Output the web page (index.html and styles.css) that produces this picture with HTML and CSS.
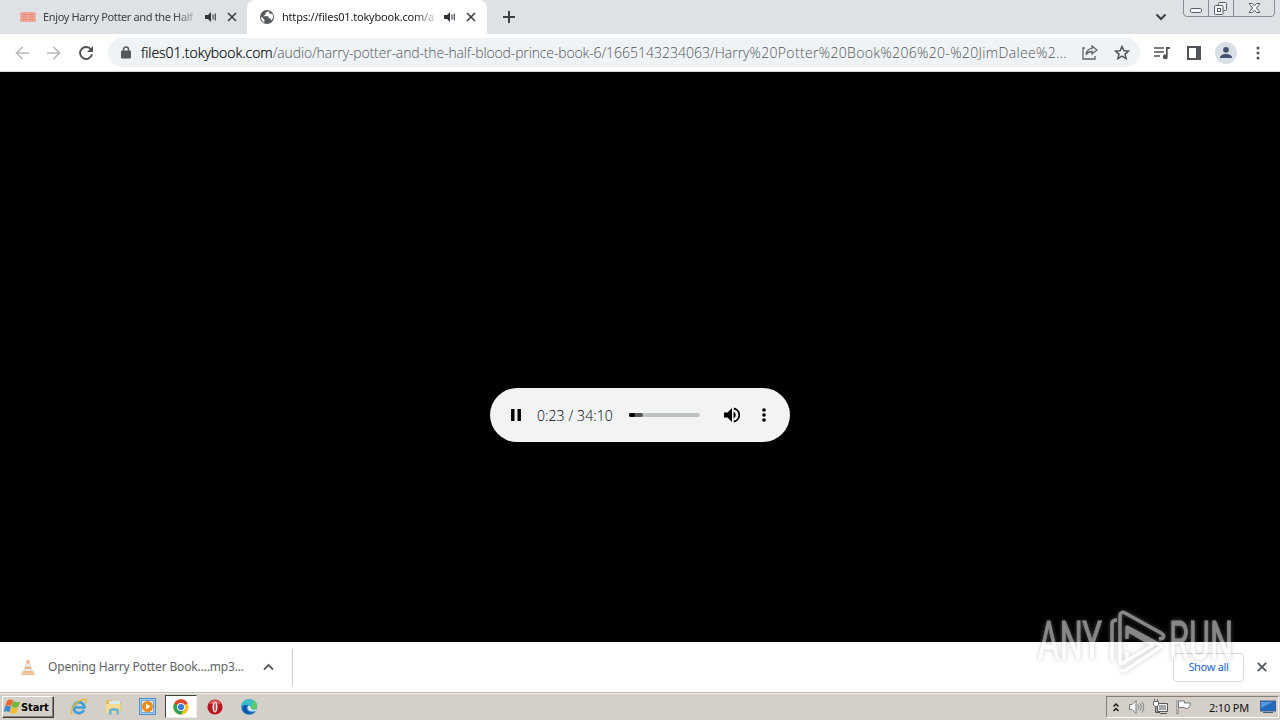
FILE: index.html
```html
<!DOCTYPE html>
<html lang="en">
<head>
  <meta charset="UTF-8">
  <title>files01.tokybook.com</title>
  <link rel="stylesheet" href="styles.css">
</head>
<body>
  <div class="tab-strip">
    <div class="tab">
      <svg class="favicon" width="16" height="16" viewBox="0 0 16 16"><rect y="3" width="16" height="10" rx="1.500" fill="#efa696"/><path d="M2 5.500h5M9 5.500h5M2 8h5M9 8h5M2 10.500h5M9 10.500h5" stroke="#e38776"/></svg>
      <span class="tab-title first">Enjoy Harry Potter and the Half</span>
      <svg class="audio" width="12" height="12" viewBox="0 0 12 12"><path d="M0 4h3l3-3v10L3 8H0z" fill="#303338"/><path d="M8 3.500v5M10.300 2.500v7" stroke="#45484d" stroke-width="1.200"/></svg>
      <svg class="tab-close" width="10" height="10" viewBox="0 0 10 10"><path d="M1 1l8 8M9 1L1 9" stroke="#3c4043" stroke-width="1.600"/></svg>
    </div>
    <div class="tab active">
      <svg class="favicon" width="16" height="16" viewBox="0 0 16 16"><circle cx="8" cy="8" r="7" fill="#55595d"/><path d="M2.200 7.400l3.200 3v3.200C3.200 12.500 1.800 10 2.200 7.400zM8.500 2.500l-2 1.500v1.500L4 7.300h5.500v2h1.800l1 2.300c2-1.700 2.300-4.500 1-6.800h-3V2.700z" fill="#fff"/></svg>
      <span class="tab-title second">https://files01.tokybook.com/au</span>
      <svg class="audio" width="12" height="12" viewBox="0 0 12 12"><path d="M0 4h3l3-3v10L3 8H0z" fill="#303338"/><path d="M8 3.500v5M10.300 2.500v7" stroke="#45484d" stroke-width="1.200"/></svg>
      <svg class="tab-close" width="10" height="10" viewBox="0 0 10 10"><path d="M1 1l8 8M9 1L1 9" stroke="#3c4043" stroke-width="1.600"/></svg>
    </div>
    <svg class="new-tab" width="14" height="14" viewBox="0 0 14 14"><path d="M7 1v12M1 7h12" stroke="#3c4043" stroke-width="2"/></svg>
    <svg class="tab-search" width="12" height="8" viewBox="0 0 12 8"><path d="M1.500 1.500L6 6l4.500-4.500" fill="none" stroke="#3c4043" stroke-width="2"/></svg>
    <div class="window-buttons">
      <svg width="92" height="17" viewBox="0 0 92 17" fill="none" stroke="#5b606c"><path d="M.5 0v13q0 3.500 3.500 3.500h84q3.500 0 3.500-3.500V0M25.500 0v16M50.500 0v16" stroke="#878c98"/><rect x="7.500" y="8.500" width="11" height="4" rx="1" fill="#f5f5f7"/><rect x="35.500" y="2.500" width="8" height="8" rx="1" fill="#eee"/><rect x="31.500" y="5.500" width="8.500" height="9" rx="1" fill="#f7f7f8"/><rect x="34.500" y="8.500" width="3" height="3"/><path d="M66 3.500h3.500l2 2.500 2-2.500H77l-3.500 4.500 3.500 4.500h-3.500l-2-2.500-2 2.500H66L69.500 8z" fill="#fafafa"/></svg>
    </div>
  </div>

  <div class="toolbar">
    <svg class="nav" width="14" height="14" viewBox="0 0 14 14"><path d="M14 7H1.500M7.500 1l-6 6 6 6" fill="none" stroke="#b9bbbe" stroke-width="1.700"/></svg>
    <svg class="nav" width="14" height="14" viewBox="0 0 14 14"><path d="M0 7h12.500M6.500 1l6 6-6 6" fill="none" stroke="#b9bbbe" stroke-width="1.700"/></svg>
    <svg class="nav" width="14" height="14" viewBox="0 0 14 14"><path d="M12 3.500A6 6 0 1 0 13 8.300" fill="none" stroke="#505357" stroke-width="1.900"/><path d="M14 0v6H8z" fill="#505357"/></svg>
    <div class="omnibox">
      <svg class="lock" width="10" height="13" viewBox="0 0 10 13"><path d="M2.500 6V3.500a2.500 2.500 0 0 1 5 0V6" fill="none" stroke="#55595d" stroke-width="1.500"/><rect y="4.500" width="10" height="8" rx="1" fill="#55595d"/></svg>
      <span class="url"><span class="host">files01.tokybook.com</span><span class="path">/audio/harry-potter-and-the-half-blood-prince-book-6/</span><span class="file">1665143234063/Harry</span><span class="escaped">%20Potter%20Book%206%20-%20JimDalee%2...</span></span>
      <svg class="share" width="16" height="15" viewBox="0 0 16 15" fill="none" stroke="#5f6368" stroke-width="1.300"><path d="M3 3H1v11h12v-3"/><path d="M10 1l5 4-5 4V6.500c-3 0-4.500 1-6 3C4.500 6 6 3.700 10 3.300z"/></svg>
      <svg class="star" width="16" height="15" viewBox="0 0 16 15"><path d="M8 1.500l1.900 4.200 4.600.4-3.500 3 1.100 4.500L8 11.200l-4.100 2.400L5 9.100l-3.500-3 4.600-.4z" fill="none" stroke="#505357" stroke-width="1.500"/></svg>
    </div>
    <svg class="media" width="17" height="14" viewBox="0 0 17 14"><path d="M0 2h10M0 6h10M0 10h6" stroke="#505357" stroke-width="1.600"/><path d="M12 10V1h4v2h-2.300v7.500a2.400 2.400 0 1 1-1.700-2" fill="#505357"/></svg>
    <svg class="side-panel" width="14" height="14" viewBox="0 0 14 14"><rect x="1" y="1" width="12" height="12" fill="#fff" stroke="#505357" stroke-width="2"/><path d="M9 1h4v12H9z" fill="#505357"/></svg>
    <svg class="profile" width="22" height="22" viewBox="0 0 22 22"><circle cx="11" cy="11" r="11" fill="#d9dfe6"/><circle cx="11" cy="7.800" r="2.900" fill="#435270"/><path d="M5 16c0-3 3-4 6-4s6 1 6 4z" fill="#435270"/></svg>
    <svg class="menu" width="4" height="14" viewBox="0 0 4 14" fill="#505357"><circle cx="2" cy="2" r="1.500"/><circle cx="2" cy="7" r="1.500"/><circle cx="2" cy="12" r="1.500"/></svg>
  </div>

  <div class="page">
    <div class="player">
      <svg class="pause" width="10" height="12" viewBox="0 0 10 12"><path d="M0 0h3.500v12H0zM6.500 0H10v12H6.500z"/></svg>
      <span class="time">0:23 / 34:10</span>
      <div class="track"><div class="buffered"><div class="played"></div></div></div>
      <svg class="volume" width="16" height="16" viewBox="0 0 16 16"><path d="M0 5.500h3.500L8 1v14l-4.500-4.500H0z"/><path d="M9.500 4.500q2.300 1.200 2.300 3.500t-2.300 3.500z"/><path d="M9.800 1.500a6.600 6.600 0 0 1 0 13" fill="none" stroke="#000" stroke-width="1.800"/></svg>
      <svg class="more" width="4" height="14" viewBox="0 0 4 14"><circle cx="2" cy="2" r="1.800"/><circle cx="2" cy="7" r="1.800"/><circle cx="2" cy="12" r="1.800"/></svg>
    </div>
  </div>

  <div class="downloads">
    <div class="download">
      <svg class="cone" width="14" height="17" viewBox="0 0 14 17"><path d="M0 16l1.500-4h11l1.500 4z" fill="#f2c39b"/><path d="M5.800 1h2.400l3.300 12h-9z" fill="#f0b88a"/><path d="M5 4.500h4l.8 3H4.200zM3.500 10h7l.6 2H2.900z" fill="#e9eaeb"/></svg>
      <span class="file-name">Opening Harry Potter Book....mp3...</span>
      <svg width="11" height="8" viewBox="0 0 11 8"><path d="M1 6.500l4.500-4.500L10 6.500" fill="none" stroke="#55595d" stroke-width="1.800"/></svg>
    </div>
    <button class="show-all"><span>Show all</span></button>
    <svg class="close-bar" width="10" height="10" viewBox="0 0 10 10"><path d="M.8.8l8.400 8.400M9.200.8L.8 9.200" stroke="#55595d" stroke-width="1.800"/></svg>
  </div>

  <div class="taskbar">
    <div class="start">
      <svg width="17" height="16" viewBox="0 0 17 16"><path d="M3 2q3-2.500 6-.5L7.300 7.300Q4.500 5.500 1.200 7z" fill="#e9652b"/><path d="M9.200 2q3 2 7 .5L14.300 8q-3 1.500-6.700-.3z" fill="#72b63d"/><path d="M1 7.500Q4 6 7 7.700L5.500 13Q2.500 11.500 0 13z" fill="#3988d5"/><path d="M7.500 8.200q3 1.700 6.500.3l-1.500 5.500q-3 1.500-6.500-.5z" fill="#f5bd25"/></svg>
      <span>Start</span>
    </div>
    <div class="launcher">
      <div class="task">
        <svg width="18" height="18" viewBox="0 0 18 18"><path d="M14 12A5.500 5.500 0 1 1 14.500 9.500H5" fill="none" stroke="#3c9fdf" stroke-width="2.700"/><path d="M2.500 16C-1.500 15 4 4 13 1.500c4-1 4 1.500 2.500 4" fill="none" stroke="#e7b832" stroke-width="1.400"/></svg>
      </div>
      <div class="task">
        <svg width="17" height="16" viewBox="0 0 17 16"><path d="M1 1h6l1 2h8v10H1z" fill="#dfbb56"/><path d="M4 2h11v6H4z" fill="#d7ecec"/><path d="M1 5h14.500v8.500H1z" fill="#f3dc8b"/><path d="M4 15.500v-5q5-3 10 0v5h-2.500v-3.800h-5v3.800z" fill="#63afe0"/></svg>
      </div>
      <div class="task">
        <svg width="17" height="17" viewBox="0 0 17 17"><rect x=".5" y=".5" width="16" height="16" fill="#a4cef0" stroke="#4d8dc9"/><rect x="2.500" y="2.500" width="12" height="12" fill="#d9edfa" stroke="#74a9d3"/><circle cx="8.500" cy="8.500" r="5.500" fill="#f38b12"/><path d="M7 5.500l4.500 3-4.500 3z" fill="#fff"/></svg>
      </div>
      <div class="task pressed">
        <svg width="16" height="16" viewBox="0 0 16 16"><circle cx="8" cy="8" r="7.700" fill="#f6c42a"/><path d="M8 8L1.300 4.200A7.700 7.700 0 0 0 7.800 15.700L11.300 10z" fill="#30a354"/><path d="M8 8L1.300 4.200a7.700 7.700 0 0 1 13.400 0z" fill="#df4535"/><circle cx="8" cy="8" r="4" fill="#fff"/><circle cx="8" cy="8" r="3.100" fill="#397be5"/></svg>
      </div>
      <div class="task">
        <svg width="16" height="16" viewBox="0 0 16 16"><circle cx="8" cy="8" r="7.600" fill="#b9151e"/><path d="M2 5a6.500 6.500 0 0 1 12 0z" fill="#db5358"/><ellipse cx="8" cy="8" rx="2.500" ry="5.500" fill="#f3eaea"/><ellipse cx="8" cy="8" rx=".7" ry="4.500" fill="#a31820"/></svg>
      </div>
      <div class="task">
        <svg width="17" height="16" viewBox="0 0 17 16"><circle cx="8" cy="8" r="7.800" fill="#1680d4"/><path d="M.5 7C1 1.500 6 0 9 .3c5 .3 8 4.500 7 8-1 3-5 2.700-6 1.500 1-4-4-5.300-9.500-2.800z" fill="#36bfc4"/><path d="M12 1.200c4 2 5 7 2.500 8.500-2 .8-4 .3-4.500-.5.500-3 2-5 2-8z" fill="#5bcb62"/><path d="M6 7c-2 5 3 8 8 6-5 5-14 0-12-5 1-2 3-2 4-1z" fill="#1554a0"/><path d="M7 7c-2 4 2 6.500 7.500 5l1-2c-3 1-5.500.5-5.500-1 0-2-2-3-3-2z" fill="#d4e6eb"/></svg>
      </div>
    </div>
    <div class="tray">
      <svg class="chevrons" width="6" height="9" viewBox="0 0 6 9"><path d="M.5 3.500L3 1l2.500 2.500M.5 8L3 5.500 5.500 8" fill="none" stroke="#111" stroke-width="1.400"/></svg>
      <svg class="sound" width="17" height="16" viewBox="0 0 17 16"><path d="M1.500 5.500H4l4-4v13l-4-4H1.500z" fill="#fafafa" stroke="#77797c"/><path d="M10 5.500q2 2.500 0 5M12 4q3 4 0 8M14 2.500q3.500 5.500 0 11" fill="none" stroke="#85878a"/></svg>
      <svg class="network" width="17" height="16" viewBox="0 0 17 16"><path d="M5.500 4.500h10v8h-10zM8 14.500h7M3.500 7v6.500H8" fill="#a5a7a8" stroke="#55585b"/><path d="M6.500 5.500h8v6h-8z" fill="none" stroke="#f3f3f3"/><path d="M1.500 2.500h5V6L5 7.500H3L1.500 6zM2.500 0v2M5.500 0v2" fill="#fff" stroke="#66696b"/></svg>
      <svg class="flag" width="16" height="16" viewBox="0 0 16 16"><path d="M1.500 1v14" stroke="#777" stroke-width="2"/><path d="M1.500 1v13" stroke="#ddd" stroke-width=".7"/><path d="M2.500 2h6v2h6q-1 6-4.500 5.500L8 8.500H2.500z" fill="#fafafa" stroke="#77797c"/></svg>
      <span class="clock">2:10 PM</span>
      <svg width="16" height="14" viewBox="0 0 16 14"><rect x=".5" y="1" width="15" height="10" fill="#2469c0" stroke="#3c6194"/><path d="M1 2h12L1 8z" fill="#5796df"/><path d="M3 12.500h10" stroke="#465b76"/></svg>
    </div>
  </div>

  <svg class="watermark" width="206" height="70" viewBox="0 0 206 70">
    <text x="5" y="52" textLength="64" lengthAdjust="spacingAndGlyphs">ANY</text>
    <text x="136" y="52" textLength="64" lengthAdjust="spacingAndGlyphs">RUN</text>
    <path d="M79 54V17q0-4 5-4M87 58V8q1-4 5-2l36 20q4 2 2 5l-4 1M94 32V20l35 19L93 63q-4 2-5-1M94 45v8M88 57l32-19-26-15" fill="none" stroke="#fff" stroke-width="3.500" stroke-linejoin="round"/>
  </svg>
</body>
</html>
```
FILE: styles.css
```css
* { box-sizing: border-box; margin: 0; padding: 0; }

body {
  width: 1280px;
  height: 720px;
  overflow: hidden;
  display: flex;
  flex-direction: column;
  position: relative;
  font-family: "Noto Sans", "DejaVu Sans", sans-serif;
  font-size: 12px;
  color: #3c4043;
}

svg { display: block; flex: none; }
span { white-space: nowrap; }

.tab-strip {
  height: 34px;
  flex: none;
  background: #dee1e6;
  display: flex;
  align-items: center;
}

.tab {
  width: 247px;
  height: 34px;
  padding: 0 10px 0 20px;
  display: flex;
  align-items: center;
}

.tab.active {
  width: 240px;
  padding: 0 11px 0 12px;
  background: #fff;
  border-radius: 8px 8px 0 0;
}

.tab-title {
  width: 153px;
  margin-left: 7px;
  font-size: 11px;
  line-height: 16px;
  padding-bottom: 1px;
  overflow: hidden;
  -webkit-mask-image: linear-gradient(to right, #000 132px, transparent 158px);
}

.tab.active .tab-title { width: 152px; }
.first { letter-spacing: -.36px; }
.second { letter-spacing: -.2px; color: #202124; }
.audio { margin-left: 9px; }
.active .audio { margin-left: 10px; }
.tab-close { margin-left: 10px; }
.new-tab { margin-left: 15px; }
.tab-search { margin-left: auto; }
.window-buttons { margin-left: 16px; margin-right: 5px; align-self: flex-start; }

.toolbar {
  height: 38px;
  flex: none;
  padding-left: 15px;
  background: #fff;
  border-bottom: 1px solid #d5d6d8;
  display: flex;
  align-items: center;
}

.nav { margin-right: 18px; }

.omnibox {
  width: 1032px;
  height: 29px;
  margin-left: -3px;
  padding: 0 10px 0 13px;
  border-radius: 15px;
  background: #f0f3f5;
  display: flex;
  align-items: center;
}

.url {
  width: 928px;
  margin-left: 10px;
  font-family: "Open Sans", "Noto Sans", sans-serif;
  font-size: 14px;
  font-weight: 300;
}

.host { color: #000; -webkit-text-stroke: .2px #000; letter-spacing: -.03px; }
.path, .file, .escaped { color: #50555a; }
.path { letter-spacing: -.14px; }
.escaped { letter-spacing: .34px; }
.share { margin-left: 13px; }
.star { margin-left: 16px; }
.media { margin-left: 14px; }
.side-panel { margin-left: 16px; }
.profile { margin-left: 14px; }
.menu { margin-left: 19px; }

.page {
  height: 570px;
  flex: none;
  background: #000;
  display: flex;
  justify-content: center;
  padding-top: 316px;
}

.player {
  width: 300px;
  height: 54px;
  padding-left: 21px;
  border-radius: 27px;
  background: #f1f3f4;
  display: flex;
  align-items: center;
}

.time {
  width: 92px;
  margin-left: 16px;
  font-family: "Open Sans", sans-serif;
  font-size: 14px;
  font-weight: 300;
  letter-spacing: .1px;
  color: #000;
}

.track, .buffered, .played { height: 4px; border-radius: 2px; }
.track { width: 71px; background: #c0c3c3; }
.buffered { width: 14px; background: #53575a; }
.played { width: 6px; background: #000; }
.volume { margin-left: 24px; }
.more { margin-left: 22px; }

.downloads {
  height: 50px;
  flex: none;
  background: #fff;
  display: flex;
  align-items: center;
}

.download {
  width: 293px;
  height: 37px;
  padding-left: 21px;
  border-right: 1px solid #c9cbce;
  display: flex;
  align-items: center;
}

.file-name {
  width: 215px;
  margin-left: 13px;
  padding-bottom: 2px;
  letter-spacing: -.16px;
  color: #5f6368;
}

.show-all {
  width: 71px;
  height: 29px;
  margin-left: auto;
  padding-bottom: 2px;
  border: 1px solid #d8dadd;
  border-radius: 4px;
  background: #fff;
  color: #1967d2;
  font: 11px "Noto Sans", sans-serif;
  letter-spacing: -.3px;
}

.close-bar { margin: 0 13px; }

.taskbar {
  height: 28px;
  flex: none;
  background: #d4d0c8;
  border-top: 1px solid #bbb8b1;
  box-shadow: inset 0 1px #f0eee9;
  display: flex;
  align-items: center;
}

.start {
  width: 52px;
  height: 22px;
  margin: 1px 0 0 2px;
  padding-left: 1px;
  border: 1px solid;
  border-color: #fff #404040 #404040 #fff;
  box-shadow: inset -1px -1px #858179;
  display: flex;
  align-items: center;
  font: bold 11px "DejaVu Sans Condensed", "DejaVu Sans", sans-serif;
  letter-spacing: -.1px;
  color: #000;
}

.launcher { display: flex; margin: 0 0 0 8px; }

.task {
  width: 34px;
  height: 23px;
  display: flex;
  align-items: center;
  justify-content: center;
}

.task.pressed {
  width: 32px;
  margin: 0 1px;
  background: #fff;
  border: 1px solid;
  border-color: #404040 #eee #eee #404040;
}

.tray {
  width: 173px;
  height: 22px;
  margin: 1px 1px 0 auto;
  padding-left: 6px;
  border: 1px solid;
  border-color: #858179 #fff #fff #858179;
  display: flex;
  align-items: center;
}

.sound { margin-left: 9px; }
.network { margin-left: 7px; }
.flag { margin-left: 7px; }

.clock {
  width: 51px;
  margin-left: 17px;
  color: #111;
  font-size: 11px;
  letter-spacing: -.2px;
}

/* Lies over both the page and the download bar */
.watermark {
  position: absolute;
  left: 1033px;
  top: 607px;
  opacity: .53;
  filter: drop-shadow(0 0 2px #999);
}

.watermark text {
  font-family: Roboto, sans-serif;
  font-size: 53px;
  fill: #fff;
  stroke: #fff;
  stroke-width: .8px;
}
```
